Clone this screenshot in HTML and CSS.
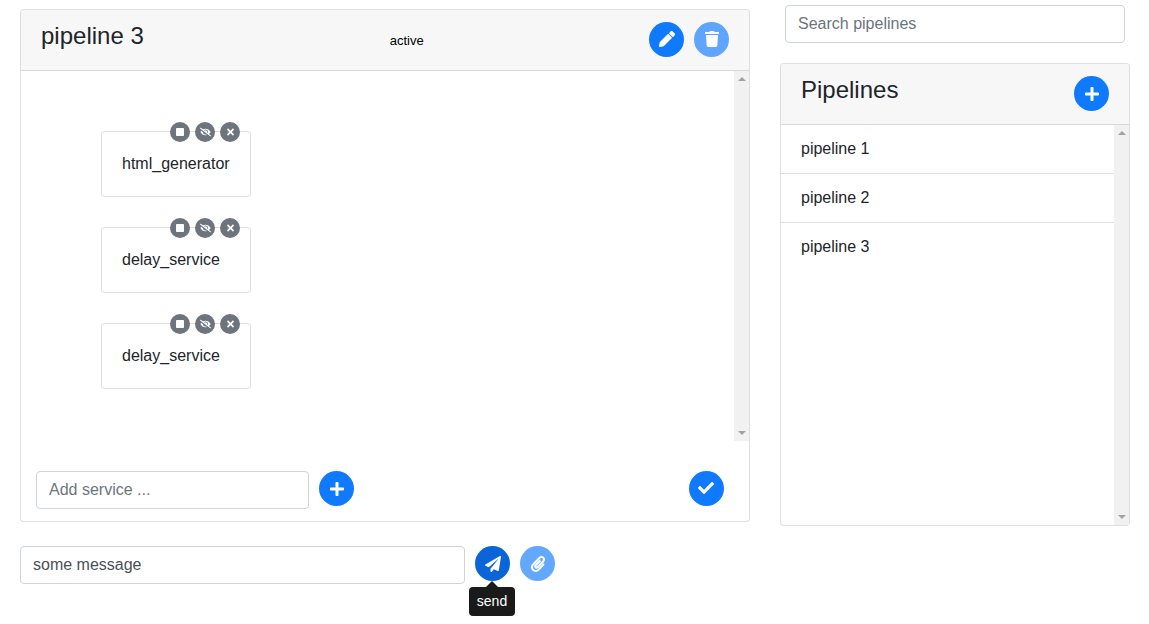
FILE: index.html
```html
<!DOCTYPE html>
<html lang="en">
<head>
<meta charset="utf-8">
<title>Pipelines</title>
<link rel="stylesheet" href="styles.css">
</head>
<body>
<svg class="sprite" aria-hidden="true">
  <symbol id="i-pencil" viewBox="0 0 512 512"><path d="M497.9 142.1l-46.1 46.1c-4.7 4.7-12.3 4.7-17 0l-111-111c-4.7-4.7-4.7-12.3 0-17l46.1-46.1c18.7-18.7 49.1-18.7 67.9 0l60.1 60.1c18.8 18.7 18.8 49.1 0 67.9zM284.2 99.8L21.6 362.4.4 483.9c-2.9 16.4 11.4 30.6 27.8 27.8l121.5-21.3 262.6-262.6c4.7-4.7 4.7-12.3 0-17l-111-111c-4.8-4.7-12.4-4.7-17.1 0z"/></symbol>
  <symbol id="i-trash" viewBox="0 0 448 512"><path d="M432 32H312l-9.4-18.7A24 24 0 0 0 281.1 0H166.8a23.72 23.72 0 0 0-21.4 13.3L136 32H16A16 16 0 0 0 0 48v32a16 16 0 0 0 16 16h416a16 16 0 0 0 16-16V48a16 16 0 0 0-16-16zM53.2 467a48 48 0 0 0 47.9 45h245.8a48 48 0 0 0 47.9-45L416 128H32z"/></symbol>
  <symbol id="i-plus" viewBox="0 0 448 512"><path d="M416 208H272V64c0-17.67-14.33-32-32-32h-32c-17.67 0-32 14.33-32 32v144H32c-17.67 0-32 14.33-32 32v32c0 17.67 14.33 32 32 32h144v144c0 17.67 14.33 32 32 32h32c17.67 0 32-14.33 32-32V304h144c17.67 0 32-14.33 32-32v-32c0-17.67-14.33-32-32-32z"/></symbol>
  <symbol id="i-check" viewBox="0 0 512 512"><path d="M173.898 439.404l-166.4-166.4c-9.997-9.997-9.997-26.206 0-36.204l36.203-36.204c9.997-9.998 26.207-9.998 36.204 0L192 312.69 432.095 72.596c9.997-9.997 26.207-9.997 36.204 0l36.203 36.204c9.997 9.997 9.997 26.206 0 36.204l-294.4 294.401c-9.998 9.997-26.207 9.997-36.204-.001z"/></symbol>
  <symbol id="i-plane" viewBox="0 0 512 512"><path d="M476 3.2L12.5 270.6c-18.1 10.4-15.8 35.6 2.2 43.2L121 358.4l287.3-253.2c5.5-4.9 13.3 2.6 8.6 8.3L176 407v80.5c0 23.6 28.5 32.9 42.5 15.8L282 426l124.6 52.2c14.2 6 30.4-2.9 33-18.2l72-432C515 7.8 493.3-6.8 476 3.2z"/></symbol>
  <symbol id="i-clip" viewBox="0 0 448 512"><path d="M43.246 466.142c-58.43-60.289-57.341-157.511 1.386-217.581L254.392 34c44.316-45.332 116.351-45.336 160.671 0 43.89 44.894 43.943 117.329 0 162.276L232.214 383.128c-29.855 30.537-78.633 30.111-107.982-.998-28.275-29.97-27.368-77.473 1.452-106.953l143.743-146.835c6.182-6.314 16.312-6.422 22.626-.241l22.861 22.379c6.315 6.182 6.422 16.312.241 22.626L171.427 319.927c-4.932 5.045-5.236 13.428-.648 18.292 4.372 4.634 11.245 4.711 15.688.165l182.849-186.851c19.613-20.062 19.613-52.725-.011-72.798-19.189-19.627-49.957-19.637-69.154 0L90.39 293.295c-34.763 35.56-35.299 93.12-1.191 128.313 34.01 35.093 88.985 35.137 123.058.286l172.06-175.999c6.177-6.319 16.307-6.433 22.626-.256l22.877 22.364c6.319 6.177 6.434 16.307.256 22.626l-172.06 175.998c-59.576 60.938-155.943 60.216-214.77-.485z"/></symbol>
  <symbol id="i-stop" viewBox="0 0 448 512"><path d="M400 32H48C21.5 32 0 53.5 0 80v352c0 26.5 21.5 48 48 48h352c26.5 0 48-21.5 48-48V80c0-26.5-21.5-48-48-48z"/></symbol>
  <symbol id="i-eye" viewBox="0 0 640 512"><path d="M320 400c-75.85 0-137.25-58.71-142.9-133.11L72.2 185.82c-13.79 17.3-26.48 35.59-36.72 55.59a32.35 32.35 0 0 0 0 29.19C89.71 376.41 197.07 448 320 448c26.91 0 52.87-4 77.89-10.46L346 397.39a144.13 144.13 0 0 1-26 2.61zm313.82 58.1l-110.55-85.44a331.25 331.25 0 0 0 81.25-102.07 32.35 32.35 0 0 0 0-29.19C550.29 135.59 442.93 64 320 64a308.15 308.15 0 0 0-147.32 37.7L45.46 3.37A16 16 0 0 0 23 6.18L3.37 31.45A16 16 0 0 0 6.18 53.9l588.36 454.73a16 16 0 0 0 22.46-2.81l19.64-25.27a16 16 0 0 0-2.82-22.45zm-183.72-142l-39.3-30.38A94.75 94.75 0 0 0 416 256a94.76 94.76 0 0 0-121.31-92.21A47.65 47.65 0 0 1 304 192a46.64 46.64 0 0 1-1.54 10l-73.61-56.89A142.31 142.31 0 0 1 320 112a143.92 143.92 0 0 1 144 144c0 21.63-5.29 41.79-13.9 60.11z"/></symbol>
  <symbol id="i-times" viewBox="0 0 352 512"><path d="M242.72 256l100.07-100.07c12.28-12.28 12.28-32.19 0-44.48l-22.24-22.24c-12.28-12.28-32.19-12.28-44.48 0L176 189.28 75.93 89.21c-12.28-12.28-32.19-12.28-44.48 0L9.21 111.45c-12.28 12.28-12.28 32.19 0 44.48L109.28 256 9.21 356.07c-12.28 12.28-12.28 32.19 0 44.48l22.24 22.24c12.28 12.28 32.2 12.28 44.48 0L176 322.72l100.07 100.07c12.28 12.28 32.2 12.28 44.48 0l22.24-22.24c12.28-12.28 12.28-32.19 0-44.48L242.72 256z"/></symbol>
</svg>

<div class="page">
  <main class="left">
    <section class="card editor">
      <header class="card-header editor-header">
        <h4 class="title">pipeline 3</h4>
        <span class="status">active</span>
        <div class="actions">
          <button class="round"><svg class="ic ic-pencil"><use href="#i-pencil"/></svg></button>
          <button class="round faded"><svg class="ic ic-trash"><use href="#i-trash"/></svg></button>
        </div>
      </header>
      <div class="scroll-area editor-scroll">
        <div class="canvas">
          <div class="node">
            <span class="node-name">html_generator</span>
            <div class="node-tools">
              <span class="tool"><svg class="t-stop"><use href="#i-stop"/></svg></span>
              <span class="tool"><svg class="t-eye"><use href="#i-eye"/></svg></span>
              <span class="tool"><svg class="t-times"><use href="#i-times"/></svg></span>
            </div>
          </div>
          <div class="node">
            <span class="node-name">delay_service</span>
            <div class="node-tools">
              <span class="tool"><svg class="t-stop"><use href="#i-stop"/></svg></span>
              <span class="tool"><svg class="t-eye"><use href="#i-eye"/></svg></span>
              <span class="tool"><svg class="t-times"><use href="#i-times"/></svg></span>
            </div>
          </div>
          <div class="node">
            <span class="node-name">delay_service</span>
            <div class="node-tools">
              <span class="tool"><svg class="t-stop"><use href="#i-stop"/></svg></span>
              <span class="tool"><svg class="t-eye"><use href="#i-eye"/></svg></span>
              <span class="tool"><svg class="t-times"><use href="#i-times"/></svg></span>
            </div>
          </div>
        </div>
        <div class="scrollbar"><i class="arrow up"></i><i class="arrow down"></i></div>
      </div>
      <footer class="editor-footer">
        <input class="field service-field" type="text" placeholder="Add service ...">
        <button class="round"><svg class="ic ic-plus"><use href="#i-plus"/></svg></button>
        <button class="round push"><svg class="ic ic-check"><use href="#i-check"/></svg></button>
      </footer>
    </section>
    <div class="composer">
      <input class="field message-field" type="text" value="some message">
      <div class="send-wrap">
        <button class="round pressed"><svg class="ic ic-plane"><use href="#i-plane"/></svg></button>
        <div class="tooltip">send</div>
      </div>
      <button class="round faded"><svg class="ic ic-clip"><use href="#i-clip"/></svg></button>
    </div>
  </main>

  <aside class="right">
    <div class="search"><input class="field search-field" type="text" placeholder="Search pipelines"></div>
    <section class="card list-card">
      <header class="card-header list-header">
        <h4 class="title">Pipelines</h4>
        <button class="round"><svg class="ic ic-plus"><use href="#i-plus"/></svg></button>
      </header>
      <div class="scroll-area list-scroll">
        <ul class="list">
          <li>pipeline 1</li>
          <li>pipeline 2</li>
          <li>pipeline 3</li>
        </ul>
        <div class="scrollbar"><i class="arrow up"></i><i class="arrow down"></i></div>
      </div>
    </section>
  </aside>
</div>
</body>
</html>
```
FILE: styles.css
```css
* { box-sizing: border-box; }
html, body { margin: 0; padding: 0; height: 100%; }
body {
  font-family: "Liberation Sans", Arial, sans-serif;
  font-size: 16px;
  line-height: 24px;
  color: #212529;
  background: #fff;
  overflow: hidden;
}
.sprite { display: none; }
.page { display: flex; align-items: flex-start; padding-left: 20px; }
.left { width: 730px; padding-top: 9px; }
.right { width: 350px; margin-left: 30px; padding-top: 5px; }

.card {
  display: flex;
  flex-direction: column;
  border: 1px solid rgba(0,0,0,.125);
  border-radius: 4px;
  background: #fff;
}
.card-header {
  display: flex;
  height: 61px;
  flex: none;
  background: #f7f7f7;
  border-bottom: 1px solid rgba(0,0,0,.125);
  border-radius: 3px 3px 0 0;
  padding: 0 20px;
}
.title {
  margin: 0;
  font-size: 24px;
  font-weight: 500;
  line-height: 29px;
  padding-top: 11px;
}
.round {
  width: 35px;
  height: 35px;
  flex: none;
  border: 0;
  padding: 0;
  border-radius: 50%;
  background: #107aff;
  display: flex;
  align-items: center;
  justify-content: center;
}
.round.faded { opacity: .65; }
.round.pressed { background: #0b65d8; }
.ic { display: block; fill: #fff; }
.ic-pencil { width: 16px; height: 16px; margin-bottom: 1px; }
.ic-trash { width: 14px; height: 16px; margin-bottom: 1px; }
.ic-plus { width: 14px; height: 16px; }
.ic-check { width: 16px; height: 16px; margin: 0 1px 1px 0; }
.ic-plane { width: 16px; height: 16px; }
.ic-clip { width: 14px; height: 16px; }

.editor { height: 513px; }
.editor-header { align-items: flex-start; }
.status {
  margin-left: 246px;
  margin-top: 19px;
  font-size: 13px;
  line-height: 24px;
  color: #000;
}
.actions { margin-left: auto; margin-top: 12px; display: flex; gap: 10px; }

.scroll-area { display: flex; }
.editor-scroll { height: 370px; }
.canvas {
  flex: 1;
  padding: 60px 0 0 80px;
  display: flex;
  flex-direction: column;
  gap: 30px;
}
.node {
  position: relative;
  width: 150px;
  height: 66px;
  border: 1px solid rgba(0,0,0,.125);
  border-radius: 4px;
  background: #fff;
  padding: 20px;
}
.node-name { display: block; line-height: 24px; white-space: nowrap; }
.node-tools {
  position: absolute;
  top: -10px;
  left: 68px;
  display: flex;
  gap: 5px;
}
.tool {
  width: 20px;
  height: 20px;
  border-radius: 50%;
  background: #6c757d;
  display: flex;
  align-items: center;
  justify-content: center;
}
.tool svg { display: block; fill: #fff; }
.t-stop { width: 8px; height: 10px; }
.t-eye { width: 11px; height: 10px; }
.t-times { width: 7px; height: 10px; }

.scrollbar {
  width: 15px;
  flex: none;
  background: #f1f1f1;
  display: flex;
  flex-direction: column;
  justify-content: space-between;
  align-items: center;
  padding: 6px 0;
}
.arrow { display: block; width: 0; height: 0; border-left: 4px solid transparent; border-right: 4px solid transparent; }
.arrow.up { border-bottom: 4px solid #a3a3a3; }
.arrow.down { border-top: 4px solid #a3a3a3; }

.editor-footer {
  display: flex;
  align-items: flex-start;
  padding: 30px 25px 0 15px;
  gap: 10px;
}
.push { margin-left: auto; }

.field {
  display: block;
  height: 38px;
  border: 1px solid #ced4da;
  border-radius: 4px;
  padding: 6px 12px;
  font: inherit;
  line-height: 24px;
  color: #495057;
  background: #fff;
  outline: 0;
}
.field::placeholder { color: #6c757d; opacity: 1; }
.service-field { width: 273px; }
.message-field { width: 445px; }

.composer {
  display: flex;
  align-items: flex-start;
  gap: 10px;
  margin-top: 24px;
}
.send-wrap { position: relative; width: 35px; height: 35px; }
.tooltip {
  position: absolute;
  top: 41px;
  left: -6px;
  width: 46px;
  height: 29px;
  border-radius: 4px;
  background: #1a1a1a;
  color: #fff;
  font-size: 14px;
  line-height: 29px;
  text-align: center;
}
.tooltip::before {
  content: "";
  position: absolute;
  top: -6px;
  left: 17px;
  border-left: 6px solid transparent;
  border-right: 6px solid transparent;
  border-bottom: 6px solid #1a1a1a;
}

.search { padding-left: 5px; }
.search-field { width: 340px; }
.list-card { height: 463px; margin-top: 20px; }
.list-header { justify-content: space-between; align-items: flex-start; padding-right: 20px; }
.list-header .round { margin-top: 12px; }
.list-scroll { flex: 1; min-height: 0; }
.list { flex: 1; list-style: none; margin: 0; padding: 0; }
.list li {
  height: 49px;
  padding: 12px 20px;
  border-bottom: 1px solid rgba(0,0,0,.125);
}
.list li:last-child { border-bottom: 0; }
```
